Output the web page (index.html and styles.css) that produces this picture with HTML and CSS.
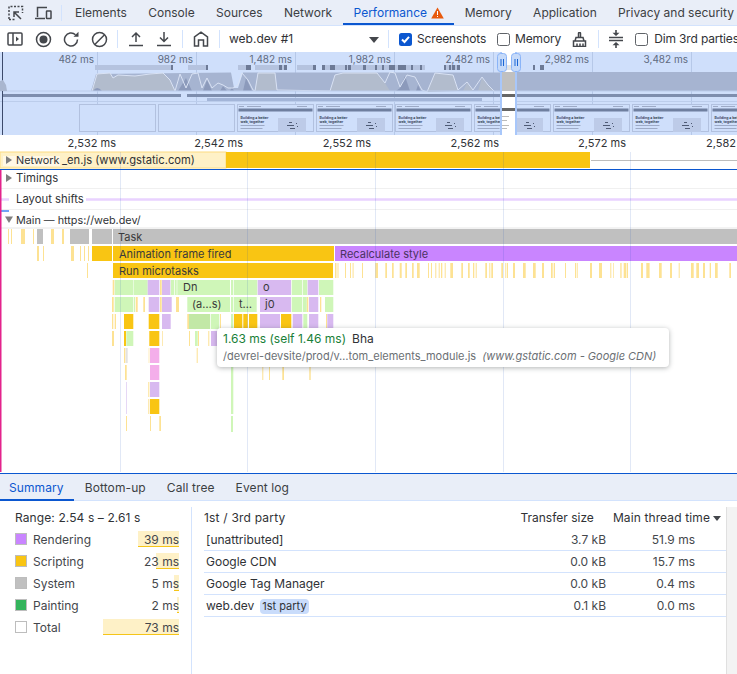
FILE: index.html
```html
<!DOCTYPE html>
<html lang="en">
<head>
<meta charset="utf-8">
<title>Performance</title>
<link rel="stylesheet" href="styles.css">
</head>
<body>
<div class="app">
  <nav class="tabs">
    <span class="tool-icon inspect"><svg width="16" height="16" viewBox="0 0 16 16"><path class="dash" d="M1 14V1.5H14.5V8M1 14.5H7"/><path class="line" d="M13 14L6 7M6 12V7H11"/></svg></span>
    <span class="tool-icon device"><svg width="18" height="16" viewBox="0 0 18 16"><path class="line" d="M3.5 12V2.5H13M1 13.500H11"/><rect class="line" x="12.500" y="6" width="4.500" height="7.500" rx=".5"/></svg></span>
    <span class="sep short"></span>
    <span class="tab">Elements</span>
    <span class="tab">Console</span>
    <span class="tab">Sources</span>
    <span class="tab">Network</span>
    <span class="tab active">Performance<svg class="warn" width="13" height="12" viewBox="0 0 13 12"><path d="M6.500 .5L12.800 11.500H.2Z"/><path class="warn-mark" d="M6 4h1v4H6zM6 9h1v1H6z"/></svg></span>
    <span class="tab">Memory</span>
    <span class="tab">Application</span>
    <span class="tab">Privacy and security</span>
  </nav>

  <div class="toolbar">
    <span class="tool"><svg width="16" height="16" viewBox="0 0 16 16"><rect class="line" x="1" y="2" width="14" height="12" rx="1"/><path class="line" d="M6 2V14"/><path class="solid" d="M9 5.500L12 8L9 10.500Z"/></svg></span>
    <span class="tool"><svg width="17" height="17" viewBox="0 0 17 17"><circle class="line" cx="8.500" cy="8.500" r="7"/><circle class="solid" cx="8.500" cy="8.500" r="4"/></svg></span>
    <span class="tool"><svg width="17" height="17" viewBox="0 0 17 17"><path class="line" d="M14.500 8.500A6.500 6.500 0 1 1 12.500 3.800"/><path class="solid" d="M10.500 5.800H15.500V.8Z"/></svg></span>
    <span class="tool"><svg width="17" height="17" viewBox="0 0 17 17"><circle class="line" cx="8.500" cy="8.500" r="7"/><path class="line" d="M3.800 13.500L13.500 3.800"/></svg></span>
    <span class="sep"></span>
    <span class="tool"><svg width="16" height="16" viewBox="0 0 16 16"><path class="line" d="M1 14.500H15M8 11V2M4 6L8 2L12 6"/></svg></span>
    <span class="tool"><svg width="16" height="16" viewBox="0 0 16 16"><path class="line" d="M1 14.500H15M8 1V10.500M4 6.500L8 10.500L12 6.500"/></svg></span>
    <span class="sep"></span>
    <span class="tool"><svg width="16" height="16" viewBox="0 0 16 16"><path class="line" d="M1.500 15V6L8 1.200L14.500 6V15H10.500V9H5.500V15Z"/></svg></span>
    <span class="sep"></span>
    <span class="select">web.dev #1<svg width="10" height="6" viewBox="0 0 10 6"><path class="solid" d="M0 0H10L5 6Z"/></svg></span>
    <span class="sep far"></span>
    <label class="check on-first"><span class="box checked"><svg width="13" height="13" viewBox="0 0 13 13"><path d="M3 6.500L5.500 9L10 3.800"/></svg></span>Screenshots</label>
    <label class="check"><span class="box"></span>Memory</label>
    <span class="tool brush"><svg width="15" height="15" viewBox="0 0 15 15"><path class="line" d="M6.500 5.500V1.500Q6.500 .5 7.500 .5T8.500 1.500V5.500M3 9L4 5.500H11L12 9M1.500 14.500V9H13.500V14.500ZM5 14.500V11.500M8 14.500V11.500M11 14.500V11.500"/></svg></span>
    <span class="sep brush-sep"></span>
    <span class="tool collapse"><svg width="14" height="18" viewBox="0 0 14 18"><path class="line" d="M0 7.500H14M0 10.500H14"/><path class="solid" d="M7 6L3.500 2.800H6.200V0H7.800V2.800H10.500ZM7 12L3.500 15.200H6.200V18H7.800V15.200H10.500Z"/></svg></span>
    <label class="check dim"><span class="box"></span>Dim 3rd parties</label>
  </div>

  <section class="overview">
    <svg width="737" height="83" viewBox="0 52 737 83">
      <defs>
        <symbol id="shot" width="77" height="28" viewBox="0 0 77 28">
          <rect class="ov-frame" x=".5" y=".5" width="76" height="27"/>
          <path class="ov-head" d="M2 2h5v1H2zM10 2h14v1H10zM60 2h10v1H60z"/>
          <rect class="ov-barline" x="1.500" y="4.500" width="74" height="3"/>
          <text class="ov-mini" x="3.500" y="14.500">Building a better</text>
          <text class="ov-mini" x="3.500" y="18.500">web, together</text>
          <path class="ov-head" d="M3.500 21h24v1h-24zM3.500 24h22v1h-22z"/>
          <rect class="ov-block" x="41" y="14" width="28" height="14"/>
          <path class="ov-speck" d="M52 18h3v1h-3zM50 21h7v1h-7zM53 24h5v1h-5zM59 19h1v1h-1zM60 22h1v1h-1z"/>
        </symbol>
      </defs>
      <rect class="ov-bg" x="0" y="52" width="737" height="83"/>
      <g class="ov-grid"><path d="M97.500 52V135M196.500 52V135M295.500 52V135M394.500 52V135M493.500 52V135M592.500 52V135M691.500 52V135"/></g>
      <g class="ov-label">
        <text x="94" y="63">482 ms</text><text x="193" y="63">982 ms</text><text x="292" y="63">1,482 ms</text><text x="391" y="63">1,982 ms</text><text x="490" y="63">2,482 ms</text><text x="589" y="63">2,982 ms</text><text x="688" y="63">3,482 ms</text>
      </g>
      <path class="ov-light" d="M95 65h77v5H95zM188 65h19v5h-19zM238 65h13v5h-13zM255 65h32v5h-32zM297 65h19v5h-19zM322 65h45v5h-45zM345 65h30v5h-30zM375 65h50v5h-50zM444 65h15v5h-15z"/>
      <path class="ov-dark" d="M171 65h2v5h-2zM206 65h2v5h-2zM246 65h5v5h-5zM279 65h3v5h-3zM284 65h3v5h-3zM313 65h3v5h-3zM322 65h3v5h-3zM330 65h5v5h-5zM345 65h2v5h-2zM348 65h3v5h-3zM363 65h3v5h-3zM375 65h2v5h-2zM382 65h2v5h-2zM389 65h6v5h-6zM398 65h8v5h-8zM411 65h2v5h-2zM420 65h2v5h-2zM444 65h2v5h-2zM449 65h2v5h-2zM452 65h3v5h-3zM457 65h3v5h-3zM533 65h2v5h-2zM540 65h4v5h-4z"/>
      <path class="ov-base" d="M91 91L96 74L231 72.500L234 88H238L243 72.500L500 72.500V91ZM516 72H737V91H516Z"/>
      <path class="ov-gray" d="M92 91L97 74L110 73L113 78L118 75L135 76L150 74L163 73L170 80L175 91ZM255 91L258 73L275 73L277 90ZM330 91L335 75L343 73L377 73L385 83L390 91ZM427 92L435 73L453 75L458 91ZM463 91L467 83L473 91ZM478 91L482 78L488 86L495 91Z"/>
      <path class="ov-deep" d="M93 91Q97 85 102 91ZM178 91L186 78L192 91ZM203 91L207 80L212 91ZM220 91L223 86L227 91ZM230 91L232 87L234 91ZM243 91L246 78L252 91ZM396 91L400 88L405 76L410 91ZM416 91L418 85L421 91Z"/>
      <path class="ov-trace" d="M92 91L97 74L110 73L113 78L118 75L135 76L150 74L163 73L170 80L175 91L180 74L186 88L192 74L198 73L202 88L207 78L212 88L218 83L223 85L228 88L233 88L238 85L242 73L248 80L253 90L255 91L258 73L275 73L277 90L330 91L335 75L343 73L377 73L385 83L390 72L395 73L400 87L407 75L415 77L422 90L427 92L435 73L453 75L458 90L467 82L473 90L482 77L488 85L495 92"/>
      <path class="ov-thin" d="M0 91H737"/>
      <path class="ov-cpu" d="M2 94H181V97H2ZM187 94H500V97H187ZM516 94H737V97H516Z"/>
      <rect class="ov-net" x="207" y="98" width="275" height="3"/>
      <path class="ov-thin" d="M0 101.500H737"/>
      <rect class="ov-frame" x="79.500" y="104.500" width="76" height="27"/>
      <rect class="ov-frame" x="158.500" y="104.500" width="76" height="27"/>
      <use href="#shot" x="237" y="104"/><use href="#shot" x="316" y="104"/><use href="#shot" x="395" y="104"/><use href="#shot" x="474" y="104"/><use href="#shot" x="553" y="104"/><use href="#shot" x="632" y="104"/><use href="#shot" x="711" y="104"/>
      <path class="ov-win" d="M501 52H516V135H501Z"/>
      <rect class="ov-win-gray" x="501" y="65" width="15" height="5"/>
      <rect class="ov-sys" x="501" y="72" width="15" height="19"/>
      <rect class="ov-win-dark" x="501" y="94" width="15" height="3"/>
      <rect class="ov-win-bar" x="501" y="108" width="15" height="3"/>
      <path class="ov-win-txt" d="M501 116h8v1h-8zM501 120h6v1h-6zM501 125h8v1h-8zM501 128h6v1h-6z"/>
      <path class="ov-edge" d="M501 52V135M516 52V135"/>
      <rect class="ov-handle" x="497.500" y="53.500" width="9" height="18" rx="3"/>
      <rect class="ov-handle" x="511.500" y="53.500" width="9" height="18" rx="3"/>
      <path class="ov-grip" d="M501 59V66M503.500 59V66M515 59V66M517.500 59V66"/>
      <path class="ov-navy" d="M2.500 52V135"/>
      <path class="ov-blob" d="M0 91V81L3 80L6 85L7 91Z"/>
    </svg>
  </section>

  <section class="timeline">
    <svg width="737" height="338" viewBox="0 135 737 338">
      <text class="t-ruler" x="116" y="147">2,532 ms</text><text class="t-ruler" x="243" y="147">2,542 ms</text><text class="t-ruler" x="371" y="147">2,552 ms</text><text class="t-ruler" x="499" y="147">2,562 ms</text><text class="t-ruler" x="626" y="147">2,572 ms</text><text class="t-ruler" x="736" y="147">2,582</text>

      <rect class="net-pale" x="0" y="152" width="226" height="16"/>
      <rect class="net-head" x="3" y="156" width="57" height="10"/>
      <rect class="net-solid" x="226" y="152" width="364" height="16"/>
      <path class="net-tail" d="M591 160.500H737"/>
      <path class="tri" d="M6 156L12 160L6 164Z"/>
      <text class="t-row" x="16" y="164">Network</text>
      <text class="t-row t-net" x="62" y="164">_en.js (www.gstatic.com)</text>
      <path class="rule-blue" d="M0 169.500H737"/>

      <path class="tri" d="M6 174L12 178L6 182Z"/>
      <text class="t-row t-wide" x="16" y="182">Timings</text>
      <path class="rule" d="M0 188.500H737M0 209.500H737"/>
      <path class="shift" d="M0 199.500H9M86 199.500H737"/>
      <text class="t-row t-wide" x="16" y="203">Layout shifts</text>
      <path class="dash-blue" d="M1 211H9"/>
      <path class="tri" d="M5 216.500H13L9 223Z"/>
      <text class="t-row" x="16" y="224">Main — https://web.dev/</text>
      <path class="rule-gray" d="M0 228H737"/>

      <path class="c-gray" d="M37 229h6v15h-6zM70 229h19v15H70zM92 229h20v15H92zM113 229h624v15H113z"/>
      <path class="c-gray-soft" d="M125.700 348h2v15h-2z"/>
      <path class="c-orange" d="M92 246h20v15H92zM113 246h221v15H113zM113 263h220v15H113zM124 314h9.300v15H124zM148.700 314h10.600v15h-10.600zM234 314h8.300v15H234zM243.300 314h4.400v15h-4.400zM249 314h8.300v15H249zM281 314h10.300v15H281zM124 331h2v15h-2zM149.300 331h10v15h-10zM150 399h9.300v15H150z"/>
      <path class="c-violet" d="M335 246h402v15H335z"/>
      <path class="c-pale" d="M8 229h1v15H8zM11 229h1v15h-1zM21 229h4v15h-4zM33 229h1v15h-1zM51 229h3v15h-3zM62 229h2v15h-2zM37 246h2v15h-2zM43 246h1v15h-1zM71 246h3v15h-3zM80 246h1v15h-1zM84 246h1v15h-1zM88 246h1v15h-1zM87 263h1v15h-1zM335 263h1.500v15H335zM337.500 263h1v15h-1zM345 263h1v15h-1zM350 263h1v15h-1zM352.600 263h1v15h-1zM362 263h1v15h-1z
      M375.300 263h2.700v15h-2.700zM385.300 263h1.700v15h-1.700zM392 263h1.700v15H392zM399.700 263h2v15h-2zM405.300 263h1.700v15h-1.700zM412 263h1.700v15H412zM417 263h2.700v15H417zM428 263h1v15h-1zM431 263h1v15h-1zM435.300 263h1v15h-1zM438.700 263h1v15h-1zM441 263h1.300v15H441zM444.700 263h1v15h-1zM450.300 263h2.700v15h-2.700zM461.300 263h1.700v15h-1.700zM468 263h1.700v15H468zM473 263h1.300v15H473zM475.700 263h1v15h-1zM485.300 263h1.700v15h-1.700zM489.300 263h1v15h-1zM491.300 263h1.700v15h-1.700zM501.300 263h1.700v15h-1.700zM505.300 263h1v15h-1zM507 263h1v15h-1zM513 263h2v15h-2zM523 263h2.700v15H523zM533 263h2.700v15H533zM542 263h2v15h-2zM551 263h1.700v15H551zM553.700 263h1.300v15h-1.300zM565 263h1v15h-1zM575 263h1.300v15H575zM577 263h.7v15h-.7zM590 263h2v15h-2zM599 263h3v15h-3zM610.300 263h1v15h-1zM613 263h.7v15h-.7zM620.300 263h1.300v15h-1.300zM623.700 263h2.700v15h-2.700zM627 263h1v15h-1zM641 263h2v15h-2zM646.300 263h3.300v15h-3.300zM659 263h2.700v15H659zM670 263h2v15h-2zM678.700 263h1v15h-1zM691 263h2.700v15H691zM696.300 263h2.700v15h-2.700zM703 263h2v15h-2zM709.700 263h1.300v15h-1.300zM715 263h2.700v15H715zM729.300 263h1.700v15h-1.700z
      M112.700 280h1.600v15h-1.600zM160 280h1.700v15H160zM112 297h1.700v15H112zM135.700 297h2v15h-2zM143.300 297h1.700v15h-1.700zM160 297h1.700v15H160zM176 297h3v15h-3zM320 297h1.300v15H320zM306.700 297h1.600v15h-1.600zM112 314h1.300v15H112zM114.700 314h1.300v15h-1.300zM187.300 314h1.700v15h-1.700zM220 314h1v15h-1zM326 314h1v15h-1zM112 331h2v15h-2zM162 331h.7v15h-.7zM189 331h1v15h-1zM198 331h1v15h-1zM208.300 331h1v15h-1zM124 348h1.300v15H124zM148.700 348h.6v15h-.6zM196.700 348h1v15h-1zM125 365h1.700v15H125zM262.300 365h1v15h-1zM269 365h1v15h-1zM282.300 365h1.700v15h-1.700zM309.300 365h1.400v15h-1.400zM148.300 382h1v15h-1zM148.300 399h1v15h-1zM126 416h1v15h-1zM150 416h1v15h-1zM159.300 416h1.700v15h-1.700z"/>
      <path class="c-green" d="M114.700 280h18.600v15h-18.600zM133.800 280h13.900v15h-13.900zM170.700 280h3.300v15h-3.300zM174.700 280h2v15h-2zM177.300 280h52.700v15h-52.700zM231 280h2.300v15H231zM234 280h23.300v15H234zM291.700 280h10.600v15h-10.600zM303 280h4.300v15H303zM319 280h14.300v15H319zM114.700 297h18.600v15h-18.600zM134 297h1v15h-1zM187.300 297h42.700v15h-42.700zM231 297h2.300v15H231zM234 297h22.700v15H234zM291.700 297h10.600v15h-10.600zM303 297h3.700v15H303zM325 297h8.300v15H325zM210.700 314h8.600v15h-8.600zM231 314h2.300v15H231zM303.300 314h4v15h-4zM126.300 331h7v15h-7zM195 331h2.700v15H195zM231 348h2.300v66H231zM231 416h2v16h-2z"/>
      <path class="c-green-deep" d="M189 314h21v15h-21z"/>
      <path class="c-purple" d="M147.700 280h11.600v15h-11.600zM162 280h8.300v15H162zM257.700 280h33.300v15h-33.300zM307.700 280h10.600v15h-10.600zM148.700 297h10.600v15h-10.600zM162 297h9.700v15H162zM260 297h31v15h-31zM309 297h9.300v15H309zM162 314h8.700v15H162zM260 314h20v15h-20zM292.700 314h9.600v15h-9.600zM309 314h9.300v15H309zM327.300 314h6v15h-6zM211 331h9v15h-9zM150 382h9.300v15H150z"/>
      <path class="c-purple-soft" d="M126 382h1v32h-1z"/>
      <path class="c-pink" d="M150 348h9.300v15H150zM150 365h9.300v15H150z"/>
      <text class="t-bar" x="118" y="241">Task</text>
      <text class="t-bar" x="119" y="258">Animation frame fired</text>
      <text class="t-bar t-violet" x="340" y="258">Recalculate style</text>
      <text class="t-bar" x="119" y="275">Run microtasks</text>
      <text class="t-bar" x="183" y="291">Dn</text>
      <text class="t-bar" x="263" y="291">o</text>
      <text class="t-bar" x="192" y="308">(a…s)</text>
      <text class="t-bar" x="239" y="308">t…</text>
      <text class="t-bar" x="265" y="308">j0</text>

      <path class="grid" d="M120.500 152V472M247.500 152V472M375.500 152V472M503.500 152V472M630.500 152V472"/>
      <path class="pink-edge" d="M.75 170V472"/>
    </svg>
    <div class="tooltip">
      <div class="tip-line"><span class="tip-time">1.63 ms (self 1.46 ms)</span><span class="tip-name">Bha</span></div>
      <div class="tip-line tip-url">/devrel-devsite/prod/v…tom_elements_module.js<em>(www.gstatic.com - Google CDN)</em></div>
    </div>
  </section>

  <nav class="subtabs">
    <span class="subtab active">Summary</span>
    <span class="subtab">Bottom-up</span>
    <span class="subtab">Call tree</span>
    <span class="subtab">Event log</span>
  </nav>

  <section class="summary">
    <div class="totals">
      <div class="range">Range: 2.54 s – 2.61 s</div>
      <div class="total-row"><span class="swatch s-render"></span><span class="total-name">Rendering</span><span class="total-val"><span class="total-bar" style="width:41px"></span><span class="total-num">39 ms</span></span></div>
      <div class="total-row"><span class="swatch s-script"></span><span class="total-name">Scripting</span><span class="total-val"><span class="total-bar" style="width:23px"></span><span class="total-num">23 ms</span></span></div>
      <div class="total-row"><span class="swatch s-system"></span><span class="total-name">System</span><span class="total-val"><span class="total-bar" style="width:5px"></span><span class="total-num">5 ms</span></span></div>
      <div class="total-row"><span class="swatch s-paint"></span><span class="total-name">Painting</span><span class="total-val"><span class="total-bar" style="width:2px"></span><span class="total-num">2 ms</span></span></div>
      <div class="total-row"><span class="swatch s-total"></span><span class="total-name">Total</span><span class="total-val"><span class="total-bar" style="width:76px"></span><span class="total-num">73 ms</span></span></div>
    </div>
    <div class="party">
      <div class="party-table">
        <div class="party-head">
          <span class="party-title">1st / 3rd party</span>
          <span>Transfer size</span>
          <span class="party-main">Main thread time<svg width="8" height="5" viewBox="0 0 8 5"><path class="solid" d="M0 0H8L4 5Z"/></svg></span>
        </div>
        <div class="party-row"><span>[unattributed]</span><span class="num">3.7 kB</span><span class="num">51.9 ms</span></div>
        <div class="party-row"><span>Google CDN</span><span class="num">0.0 kB</span><span class="num">15.7 ms</span></div>
        <div class="party-row"><span>Google Tag Manager</span><span class="num">0.0 kB</span><span class="num">0.4 ms</span></div>
        <div class="party-row"><span>web.dev<span class="badge">1st party</span></span><span class="num">0.1 kB</span><span class="num">0.0 ms</span></div>
      </div>
      <div class="gutter"></div>
    </div>
  </section>
</div>
</body>
</html>
```

FILE: styles.css
```css
* { box-sizing: border-box; }
html, body { margin: 0; padding: 0; background: #fff; }
body { font: 12px/1.2 Inter, "Liberation Sans", sans-serif; color: #303236; }
.app { width: 737px; height: 674px; display: flex; flex-direction: column; overflow: hidden; }
svg { display: block; flex: none; }
.line { fill: none; stroke: #44474c; stroke-width: 1.5; }
.dash { fill: none; stroke: #44474c; stroke-width: 1.5; stroke-dasharray: 2 1.500; }
.solid { fill: #44474c; }

.tabs { height: 26px; display: flex; align-items: center; background: #e9eef8; border-bottom: 1px solid #d3e3fd; white-space: nowrap; }
.tool-icon { display: flex; align-items: center; }
.inspect { margin-left: 8px; }
.device { margin-left: 10px; }
.sep { width: 1px; height: 18px; background: #d3e3fd; margin: 0 4px; flex: none; }
.sep.short { height: 16px; margin: 0 2.300px 0 9px; }
.tab { height: 25px; padding: 1px 10.700px 0; display: flex; align-items: center; color: #3c4043; flex: none; }
.tab.active { color: #0b57d0; box-shadow: inset 0 -2px 0 #0b57d0; padding-right: 10px; }
.warn { margin-left: 4px; fill: #e8590c; }
.warn-mark { fill: #fff; }

.toolbar { height: 26px; display: flex; align-items: center; padding-left: 1px; background: #fff; white-space: nowrap; }
.tool { width: 28px; height: 26px; display: flex; align-items: center; justify-content: center; flex: none; }
.select { width: 150px; height: 26px; padding-top: 1px; margin-left: 5px; display: flex; align-items: center; justify-content: space-between; font-size: 12px; color: #303236; flex: none; }
.sep.far { margin: 0 0 0 9px; }
.check { height: 26px; display: flex; align-items: center; margin-left: 11px; color: #303236; flex: none; padding-top: 1px; letter-spacing: -.15px; }
.check.on-first { margin-left: 10px; }
.box { width: 13px; height: 13px; margin-right: 5px; border: 1.250px solid #5f6368; border-radius: 2.500px; background: #fff; flex: none; }
.box.checked { border: none; background: #0b57d0; }
.box.checked path { fill: none; stroke: #fff; stroke-width: 2; }
.brush { margin-left: 4.500px; }
.sep.brush-sep { margin: 0 0 0 4.500px; }
.collapse { margin-left: 2.500px; }
.check.dim { margin-left: 5.500px; }
.check.dim .box { margin-right: 6px; }

.overview { height: 83px; flex: none; }
.ov-bg { fill: #cfdffb; }
.ov-grid path { fill: none; stroke: #b6c8e8; stroke-width: 1; }
.ov-label text { font-size: 10px; fill: #5f6b80; text-anchor: end; }
.ov-light { fill: #b5c3df; }
.ov-dark { fill: #6d7a96; }
.ov-base { fill: #a6b4d1; }
.ov-gray { fill: #b2bccd; }
.ov-deep { fill: #8c9abb; }
.ov-trace { fill: none; stroke: #d9e2f4; stroke-width: 1; }
.ov-thin { fill: none; stroke: #bccdeb; stroke-width: 1; }
.ov-cpu { fill: #7e8eae; }
.ov-net { fill: #a3b5d8; }
.ov-frame { fill: #cfdffb; stroke: #b2c1df; stroke-width: 1; }
.ov-head { fill: #9daac6; }
.ov-barline { fill: #6f7f9f; }
.ov-mini { font-size: 3.500px; font-weight: 700; fill: #3e4a63; }
.ov-block { fill: #bdcbe8; }
.ov-speck { fill: #4f5b75; }
.ov-win { fill: #fff; }
.ov-win-gray { fill: #e4e4e4; }
.ov-sys { fill: #c0c0c0; }
.ov-win-dark { fill: #666; }
.ov-win-bar { fill: #666; }
.ov-win-txt { fill: #bbb; }
.ov-edge { fill: none; stroke: #a8c7fa; stroke-width: 2; }
.ov-handle { fill: #c6daf9; stroke: #8ab4f8; stroke-width: 1; }
.ov-grip { fill: none; stroke: #1a66d6; stroke-width: 1; }
.ov-navy { fill: none; stroke: #3c4a6b; stroke-width: 1; }
.ov-blob { fill: #a9b6cf; }

.timeline { height: 338px; position: relative; flex: none; background: #fff; }
.t-ruler { font-size: 11px; fill: #303236; text-anchor: end; }
.t-row { font-size: 10.800px; fill: #303236; }
.t-wide { font-size: 11.300px; }
.t-net { font-size: 11.200px; }
.t-bar { font-size: 11px; fill: #3a3a3a; }
.t-violet { fill: #4a3361; }
.net-pale { fill: #fef1c7; stroke: #fbdc82; stroke-width: 1; }
.net-head { fill: #fff8e6; }
.net-solid { fill: #f9c513; }
.net-tail { fill: none; stroke: #bdbdbd; stroke-width: 1; }
.tri { fill: #7f7f7f; }
.rule-blue { fill: none; stroke: #0b57d0; stroke-width: 1; }
.rule { fill: none; stroke: #f0f0f0; stroke-width: 1; }
.rule-gray { fill: none; stroke: #e6e6e6; stroke-width: 1; }
.shift { fill: none; stroke: #e9d2ff; stroke-width: 2.500; }
.dash-blue { fill: none; stroke: #4285f4; stroke-width: 1.500; }
.c-gray { fill: #c0c0c0; }
.c-gray-soft { fill: #e2e2e2; }
.c-orange { fill: #f9c513; }
.c-violet { fill: #c985ff; }
.c-pale { fill: #fde293; }
.c-green { fill: #cff6b8; }
.c-green-deep { fill: #c2e8a6; }
.c-purple { fill: #d8b9f0; }
.c-purple-soft { fill: #e6d8f5; }
.c-pink { fill: #f4aeea; }
.grid { fill: none; stroke: #1a4fb8; stroke-opacity: .13; stroke-width: 1; }
.pink-edge { fill: none; stroke: #e3238c; stroke-width: 1.500; }

.tooltip { position: absolute; left: 217px; top: 193px; width: 452px; height: 39px; padding: 3px 6px; background: #fff; border-radius: 4px; box-shadow: 0 1px 5px rgba(60, 64, 67, .4); white-space: nowrap; }
.tip-line { height: 17px; display: flex; align-items: center; }
.tip-time { color: #188038; margin-right: 6px; }
.tip-name { color: #303236; }
.tip-url { font-size: 11px; color: #6b6f74; }
.tip-url em { margin-left: 6px; }

.subtabs { height: 28px; display: flex; background: #e9eef8; border-top: 1px solid #0b57d0; border-bottom: 1px solid #d3e3fd; flex: none; }
.subtab { height: 27px; padding: 1px 10.500px 0; display: flex; align-items: center; color: #3c4043; letter-spacing: .1px; }
.subtab.active { color: #0b57d0; box-shadow: inset 0 -2px 0 #0b57d0; padding-left: 9px; }

.summary { flex: 1; display: flex; min-height: 0; }
.totals { width: 191px; padding: 7px 12px 0 15px; flex: none; }
.range { height: 20px; display: flex; align-items: center; letter-spacing: .1px; }
.total-row { height: 22px; display: flex; align-items: center; }
.swatch { width: 12px; height: 12px; margin-right: 6px; border: 1px solid #bdbdbd; flex: none; }
.s-render { background: #c985ff; }
.s-script { background: #f9c513; }
.s-system { background: #c0c0c0; }
.s-paint { background: #34b45c; }
.s-total { background: #fff; }
.total-name { flex: 1; color: #44474c; padding-top: 2px; }
.total-val { position: relative; width: 90px; height: 16px; display: flex; align-items: center; justify-content: flex-end; }
.total-bar { position: absolute; right: 0; top: 0; bottom: 0; background: #fef1c7; border-bottom: 1px solid #f5c518; }
.total-num { position: relative; color: #44474c; padding-top: 2px; }

.party { flex: 1; display: flex; margin-top: 6px; border-left: 1px solid #d3e3fd; min-width: 0; }
.party-table { flex: 1; padding-left: 12px; }
.party-head { height: 22px; display: flex; align-items: center; padding: 1px 5px 0 0; justify-content: flex-end; }
.party-title { margin-right: auto; letter-spacing: .2px; }
.party-main { display: flex; align-items: center; margin-left: 19px; letter-spacing: .12px; }
.party-main svg { margin-left: 3px; }
.party-row { height: 22px; display: grid; grid-template-columns: 1fr 120px 89px 31px; align-items: center; padding: 2px 0 0 2px; border-bottom: 1px solid #d3e3fd; color: #303236; }
.num { text-align: right; color: #44474c; }
.badge { margin-left: 6px; padding: 1px 2px; display: inline-block; background: #c9dcfb; border-radius: 4px; font-size: 11px; }
.gutter { width: 11px; background: #f3f3f3; border-left: 1px solid #e0e0e0; flex: none; }
```
